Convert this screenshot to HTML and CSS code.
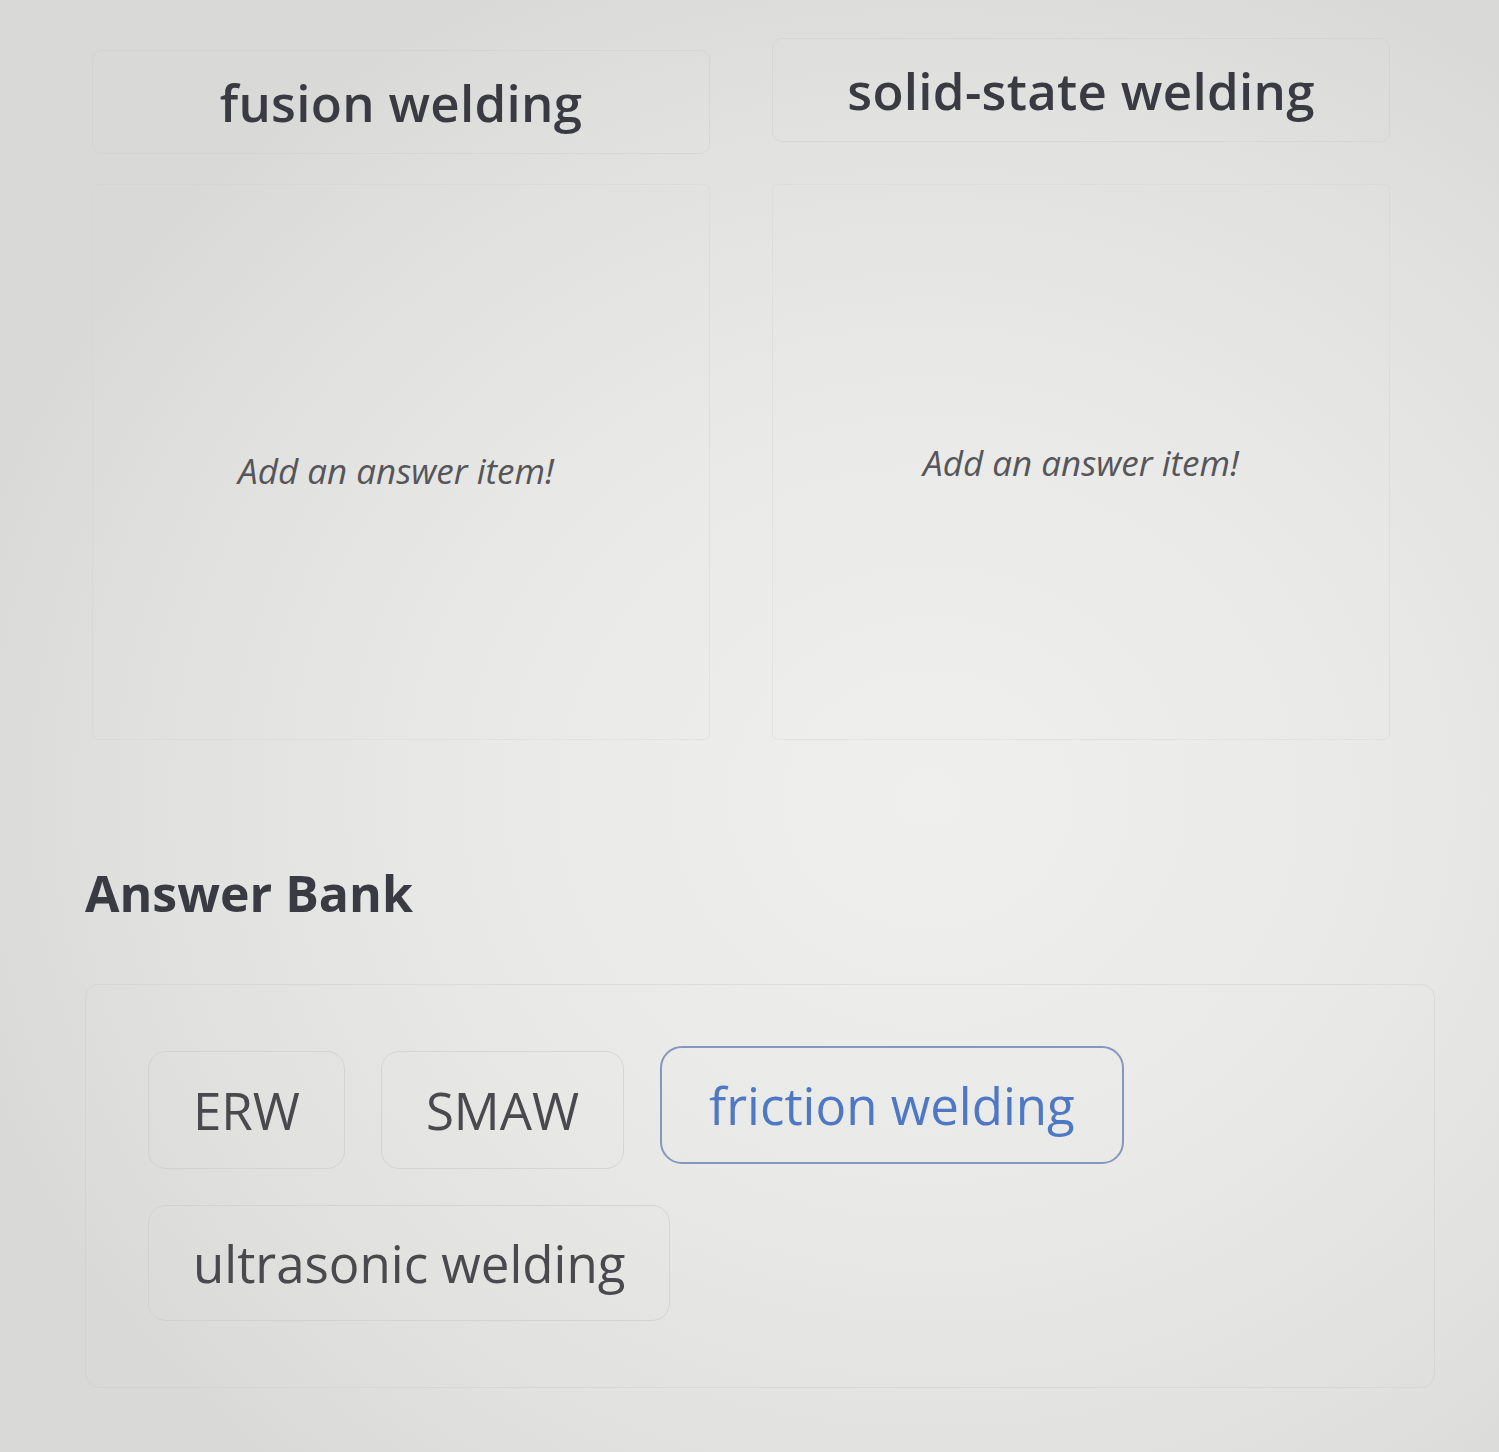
FILE: index.html
```html
<!DOCTYPE html>
<html lang="en">
<head>
<meta charset="utf-8">
<title>Sort the welding processes</title>
<link rel="stylesheet" href="styles.css">
</head>
<body>
<main class="page">
  <section class="board">
    <div class="category"><h2 class="category-title">fusion welding</h2></div>
    <div class="category category-right"><h2 class="category-title">solid-state welding</h2></div>
    <div class="dropzone"><p class="placeholder">Add an answer item!</p></div>
    <div class="dropzone dropzone-right"><p class="placeholder">Add an answer item!</p></div>
  </section>

  <h2 class="bank-title">Answer Bank</h2>

  <section class="bank">
    <button class="chip">ERW</button>
    <button class="chip">SMAW</button>
    <button class="chip chip-selected">friction welding</button>
    <button class="chip">ultrasonic welding</button>
  </section>
</main>
</body>
</html>
```

FILE: styles.css
```css
html, body {
  margin: 0;
  padding: 0;
}

body {
  width: 1499px;
  height: 1452px;
  overflow: hidden;
  font-family: "Open Sans", "Liberation Sans", sans-serif;
  color: #3d3d45;
  background:
    radial-gradient(ellipse 1000px 900px at 62% 55%, #efefee 0%, #e9e9e7 45%, #e0e0de 80%, #d9d9d7 100%);
}

.page {
  padding: 38px 64px 0 85px;
}

/* two sorting columns */
.board {
  display: grid;
  grid-template-columns: 618px 618px;
  grid-template-rows: 116px 556px;
  column-gap: 62px;
  row-gap: 30px;
  margin-left: 7px;
}

.category {
  display: flex;
  align-items: center;
  justify-content: center;
  border: 1px solid rgba(205, 205, 203, 0.45);
  border-radius: 10px;
  margin-top: 12px;
}

.category-right {
  margin-top: 0;
  margin-bottom: 12px;
}

.category-title {
  margin: 0;
  font-size: 51px;
  font-weight: 600;
  letter-spacing: 0.3px;
  color: #3a3a42;
}

.dropzone {
  display: flex;
  align-items: center;
  justify-content: center;
  border: 1px solid rgba(210, 210, 208, 0.35);
  border-radius: 6px;
  padding-right: 10px;
  padding-top: 16px;
}

.dropzone-right {
  padding-top: 0;
  padding-right: 0;
}

.placeholder {
  margin: 0;
  font-size: 35px;
  font-style: italic;
  color: #55555a;
}

.bank-title {
  margin: 128px 0 0 0;
  font-size: 50px;
  font-weight: 700;
  line-height: 1;
  color: #3a3a42;
}

/* answer chips */
.bank {
  margin-top: 66px;
  width: 1350px;
  height: 404px;
  box-sizing: border-box;
  border: 1px solid rgba(205, 205, 203, 0.5);
  border-radius: 14px;
  padding: 66px 60px 0 62px;
  display: flex;
  flex-wrap: wrap;
  align-content: flex-start;
  column-gap: 36px;
  row-gap: 36px;
}

.chip {
  font-family: inherit;
  font-size: 51px;
  line-height: 70px;
  color: #4a4a4e;
  background: transparent;
  border: 1.5px solid rgba(205, 205, 203, 0.7);
  border-radius: 18px;
  padding: 22px 44px;
  cursor: pointer;
}

.chip-selected {
  color: #4f78c4;
  border: 2px solid #8497bd;
  border-radius: 22px;
  padding: 22px 47px;
  margin-top: -5px;
  margin-bottom: 5px;
}
```
